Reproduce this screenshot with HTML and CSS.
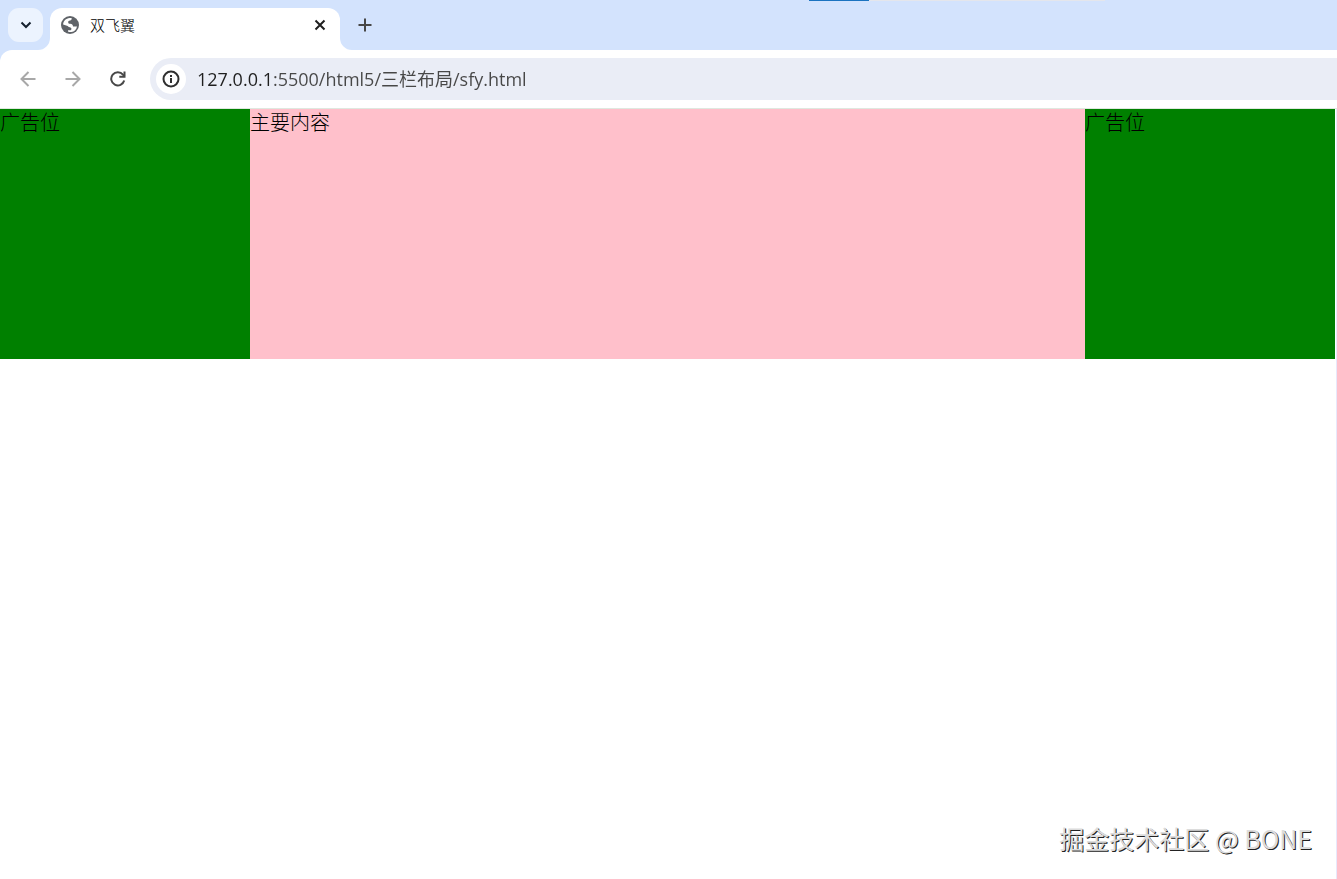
FILE: index.html
```html
<!DOCTYPE html>
<html lang="zh-CN">
<head>
    <meta charset="UTF-8">
    <meta name="viewport" content="width=device-width, initial-scale=1.0">
    <title>双飞翼</title>
    <link rel="stylesheet" href="styles.css">
</head>
<body>
    <header class="browser">
        <div class="tab-strip">
            <div class="edge-bar"></div>
            <button class="tab-search" type="button" aria-label="搜索标签页">
                <svg width="12" height="8" viewBox="0 0 12 8"><path d="M1.500 1.500 6 6l4.500-4.500" fill="none" stroke="#15202e" stroke-width="2"/></svg>
            </button>
            <div class="tab">
                <svg class="curve curve-left" viewBox="0 0 12 12"><path d="M12 0v12H0A12 12 0 0 0 12 0z" fill="#fff"/></svg>
                <svg width="20" height="20" viewBox="0 0 20 20">
                    <circle cx="10" cy="10" r="9" fill="#5f6368"/>
                    <path d="M11.600 3.100c.3 1.300-.3 2.300-1.600 2.500-1.300.1-1.800.6-1.800 1.600 0 1.100.7 1.600 2 1.600 1.800.1 2.700.9 2.800 2.600h4c-.4 2.800-2.600 5.300-5.600 5.700H9.200c-.9-.2-1.300-.9-1.200-1.900h2.200c.9 0 1.300-.6 1.200-1.500-.1-1-.7-1.400-1.700-1.500-1-.1-1.500-.5-2-1.200L3.100 9.500C3.300 6.200 6 3.200 9.600 3z" fill="#fff"/>
                </svg>
                <span class="tab-title">双飞翼</span>
                <button class="tab-close" type="button" aria-label="关闭">
                    <svg width="12" height="12" viewBox="0 0 12 12"><path d="m1.500 1.500 9 9m0-9-9 9" stroke="#1f1f1f" stroke-width="2"/></svg>
                </button>
                <svg class="curve curve-right" viewBox="0 0 12 12"><path d="M0 0v12h12A12 12 0 0 1 0 0z" fill="#fff"/></svg>
            </div>
            <button class="new-tab" type="button" aria-label="新标签页">
                <svg width="14" height="14" viewBox="0 0 14 14"><path d="M7 .500v13M.500 7h13" stroke="#474747" stroke-width="2"/></svg>
            </button>
        </div>
        <div class="toolbar">
            <button class="nav-btn" type="button" aria-label="后退" disabled>
                <svg width="16" height="16" viewBox="0 0 16 16"><path d="M15.500 8H2m6.500-7L1.500 8l7 7" fill="none" stroke="#a8a8a8" stroke-width="2"/></svg>
            </button>
            <button class="nav-btn" type="button" aria-label="前进" disabled>
                <svg width="16" height="16" viewBox="0 0 16 16"><path d="M.500 8H14M7.500 1l7 7-7 7" fill="none" stroke="#a8a8a8" stroke-width="2"/></svg>
            </button>
            <button class="nav-btn" type="button" aria-label="重新加载">
                <svg width="16" height="16" viewBox="0 0 16 16"><path d="M14.200 9.500A6.600 6.600 0 1 1 13 3.700l1.500 1.800" fill="none" stroke="#474747" stroke-width="2"/><path d="M15.500.500v6.300H9.300v-2h4.200V.500z" fill="#474747"/></svg>
            </button>
            <div class="address">
                <button class="site-info" type="button" aria-label="网站信息">
                    <svg width="18" height="18" viewBox="0 0 18 18"><circle cx="9" cy="9" r="7.500" fill="none" stroke="#303030" stroke-width="2"/><path d="M8 8h2v5H8zM8 5h2v2H8z" fill="#303030"/></svg>
                </button>
                <input class="url" type="text" aria-label="地址栏" value="127.0.0.1:5500/html5/三栏布局/sfy.html" spellcheck="false">
            </div>
        </div>
    </header>
    <main class="page">
        <div class="columns">
            <div class="left">广告位</div>
            <div class="center">主要内容</div>
            <div class="right">广告位</div>
        </div>
        <div class="watermark">掘金技术社区 @ BONE</div>
    </main>
</body>
</html>
```
FILE: styles.css
```css
* {
    box-sizing: border-box;
}

body {
    margin: 0;
    min-height: 100vh;
    display: flex;
    flex-direction: column;
    font-family: "Open Sans", "Noto Sans CJK SC", sans-serif;
    background-color: #fff;
}

button {
    display: flex;
    align-items: center;
    justify-content: center;
    padding: 0;
    border: none;
    background: none;
}

.browser {
    background-color: #d3e3fd;
}

.tab-strip {
    position: relative;
    display: flex;
    height: 50px;
    padding: 8px 8px 0;
}

/* window edge showing above the tabs */
.edge-bar {
    position: absolute;
    top: 0;
    right: 232px;
    width: 296px;
    height: 1px;
    background-color: #e4e6ec;
    border-left: 60px solid #1a73c0;
}

.tab-search {
    width: 35px;
    height: 34px;
    border-radius: 11px;
    background-color: #ecf3fe;
}

.tab {
    position: relative;
    display: flex;
    align-items: center;
    width: 290px;
    height: 42px;
    margin-left: 7px;
    padding: 0 10px 8px;
    border-radius: 12px 12px 0 0;
    background-color: #fff;
}

.curve {
    position: absolute;
    bottom: 0;
    width: 12px;
    height: 12px;
}

.curve-left {
    left: -12px;
}

.curve-right {
    right: -12px;
}

.tab-title {
    flex: 1;
    margin-left: 10px;
    font-size: 15px;
    font-weight: 300;
    line-height: 20px;
    color: #000;
}

.tab-close {
    width: 20px;
    height: 20px;
}

.new-tab {
    width: 34px;
    height: 34px;
    margin-left: 8px;
}

.toolbar {
    display: flex;
    align-items: center;
    height: 59px;
    padding: 0 0 1px 10px;
    border-bottom: 1px solid #dfe8df;
    border-top-left-radius: 12px;
    background-color: #fff;
}

.nav-btn {
    width: 35px;
    height: 35px;
    margin-right: 10px;
}

.address {
    flex: 1;
    display: flex;
    align-items: center;
    height: 42px;
    margin-left: 5px;
    padding-left: 6px;
    border-radius: 21px 0 0 21px;
    background-color: #eaedf6;
}

.site-info {
    width: 30px;
    height: 30px;
    border-radius: 50%;
    background-color: #fff;
}

/* host is darker than the path */
.url {
    flex: 1;
    margin-left: 11px;
    padding: 0;
    border: none;
    outline: none;
    font-family: inherit;
    font-size: 18px;
    line-height: 26px;
    color: transparent;
    background: linear-gradient(to right, #1f1f1f 74px, #474747 74px);
    -webkit-background-clip: text;
    background-clip: text;
}

.page {
    flex: 1;
    display: flex;
    flex-direction: column;
    justify-content: space-between;
    border-right: 1px solid #e8e8fb;
    padding-right: 1px;
}

.columns {
    display: flex;
    font-size: 20px;
    font-weight: 300;
    line-height: 28px;
    color: #000;
}

.left, .right {
    width: 250px;
    height: 250px;
    background-color: green;
}

.center {
    flex: 1;
    background-color: pink;
}

.watermark {
    padding: 0 23px 23px 0;
    text-align: right;
    font-family: "Noto Sans CJK SC", sans-serif;
    font-size: 25px;
    line-height: 36px;
    color: #dcdcdc;
    text-shadow: 1px 1px 0 #222;
}
```
